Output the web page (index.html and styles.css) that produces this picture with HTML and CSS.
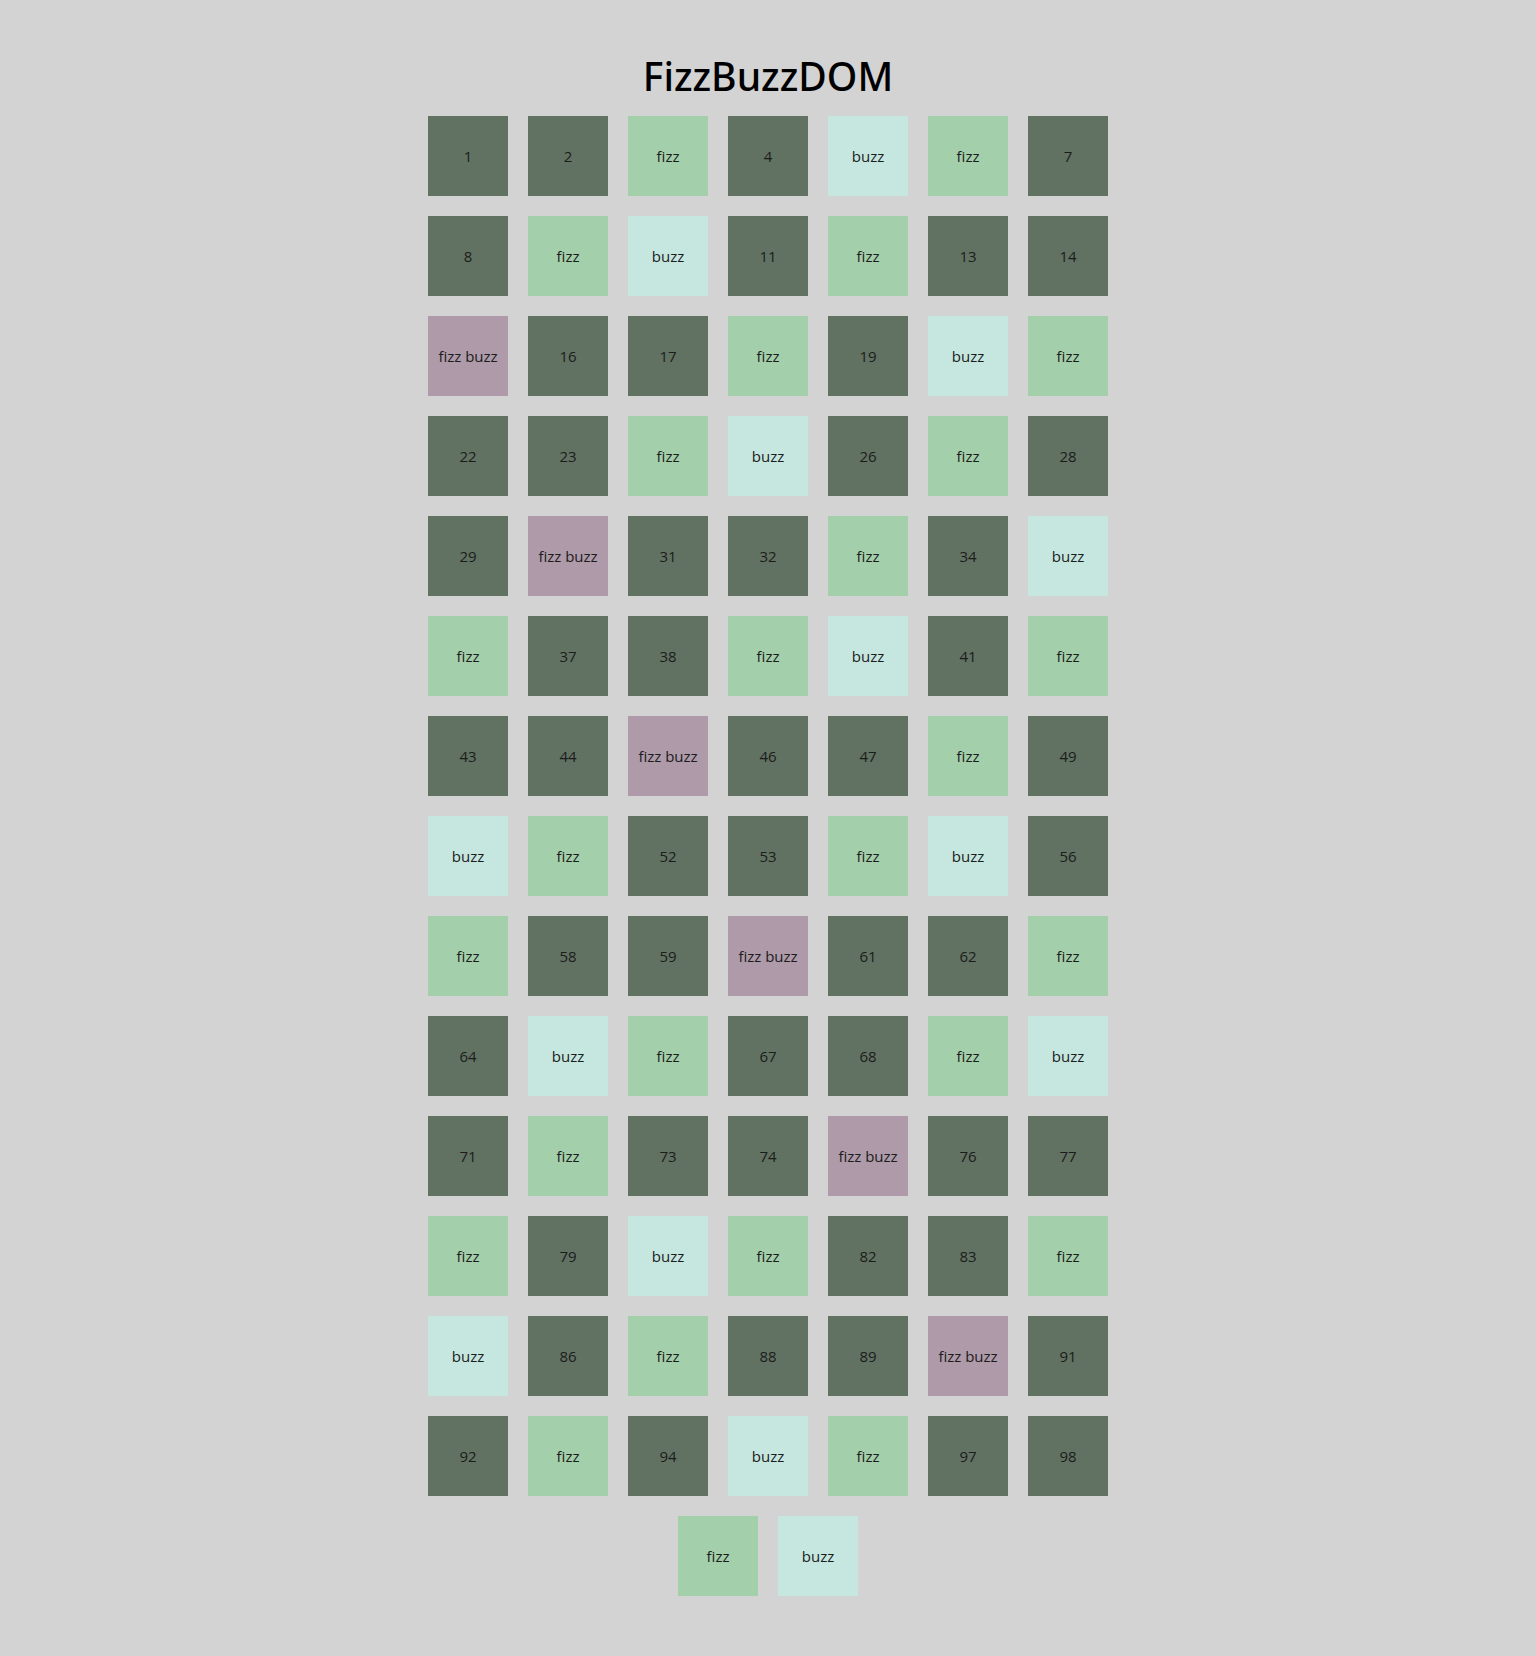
FILE: index.html
```html
<!DOCTYPE html>
<html>

<head>
	<meta charset="UTF-8">
	<title>FizzBuzzDOM</title>
	<link rel="stylesheet" href="styles.css">
</head>

<body>
	<h1 class="title">FizzBuzzDOM</h1>

	<!-- boxes get filled in by the script below -->
	<div class="board" id="board"></div>

	<script type="text/javascript">
		var board = document.getElementById("board");

		function makeBox(n) {
			var box = document.createElement("div");
			box.className = "box";
			if (n % 15 == 0) {
				box.classList.add("fizzbuzz");
				box.innerHTML = "fizz buzz";
			} else if (n % 3 == 0) {
				box.classList.add("fizz");
				box.innerHTML = "fizz";
			} else if (n % 5 == 0) {
				box.classList.add("buzz");
				box.innerHTML = "buzz";
			} else {
				box.classList.add("number");
				box.innerHTML = n;
			}
			return box;
		}

		for (var i = 1; i <= 100; i++) {
			board.appendChild(makeBox(i));
		}
	</script>
</body>

</html>
```

FILE: styles.css
```css
body {
  margin: 0;
  background-color: #d3d3d3;
  font-family: "Open Sans", "Noto Sans", sans-serif;
  color: #1c1c1c;
}

h1.title {
  margin: 52px 0 6px;
  font-family: "Noto Sans", "Open Sans", sans-serif;
  font-size: 39px;
  line-height: 48px;
  font-weight: 500;
  text-align: center;
  color: #000;
}

.board {
  width: 700px;
  margin: 0 auto;
  display: flex;
  flex-wrap: wrap;
  justify-content: center;
}

.box {
  width: 80px;
  height: 80px;
  margin: 10px;
  display: flex;
  align-items: center;
  justify-content: center;
  font-size: 15px;
}

.number {
  background-color: #617262;
}

.fizz {
  background-color: #a3cfab;
}

.buzz {
  background-color: #c5e7e0;
}

.fizzbuzz {
  background-color: #ae9aa9;
}
```
